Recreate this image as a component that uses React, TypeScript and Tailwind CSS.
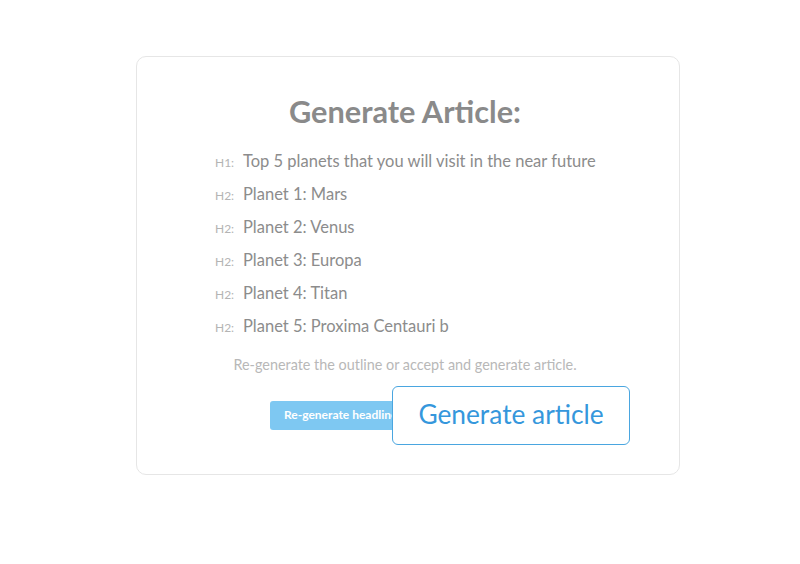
import React from "react";

const rows: [string, string][] = [
  ["H1:", "Top 5 planets that you will visit in the near future"],
  ["H2:", "Planet 1: Mars"],
  ["H2:", "Planet 2: Venus"],
  ["H2:", "Planet 3: Europa"],
  ["H2:", "Planet 4: Titan"],
  ["H2:", "Planet 5: Proxima Centauri b"],
];

export default function App() {
  return (
    <div className="w-[800px] h-[564px] bg-white pt-[56px] font-['Lato','Liberation_Sans',sans-serif]">
      <div className="ml-[136px] w-[544px] h-[419px] border border-[#e6e6e6] rounded-[10px] bg-white">
        <h1 className="mt-[35px] pr-[6px] text-center text-[30.7px] leading-[40px] font-bold text-[#8a8a8a]">
          Generate Article:
        </h1>
        <div className="mt-[17px] pl-[78px] flex flex-col">
          {rows.map(([l, t], i) => (
            <div key={i} className="flex items-baseline h-[33px]">
              <span className="w-[28px] text-[12px] text-[#b4b4b4]">{l}</span>
              <span className="text-[16.5px] text-[#8c8c8c]">{t}</span>
            </div>
          ))}
        </div>
        <p className="mt-[7px] pr-[6px] text-center text-[14.4px] text-[#b8b8b8]">
          Re-generate the outline or accept and generate article.
        </p>
        <div className="mt-[10px] pl-[133px] flex items-center">
          <div className="w-[150px] h-[29px] rounded-[3px] bg-[#7ec8f2] flex items-center pl-[14px] overflow-hidden">
            <span className="text-[12px] font-bold text-white whitespace-nowrap">Re-generate headlines</span>
          </div>
          <button className="relative -ml-[28px] w-[238px] h-[59px] bg-white border-[1.5px] border-[#4aa6e0] rounded-[6px] text-[26.3px] text-[#3597dc]">
            Generate article
          </button>
        </div>
      </div>
    </div>
  );
}
